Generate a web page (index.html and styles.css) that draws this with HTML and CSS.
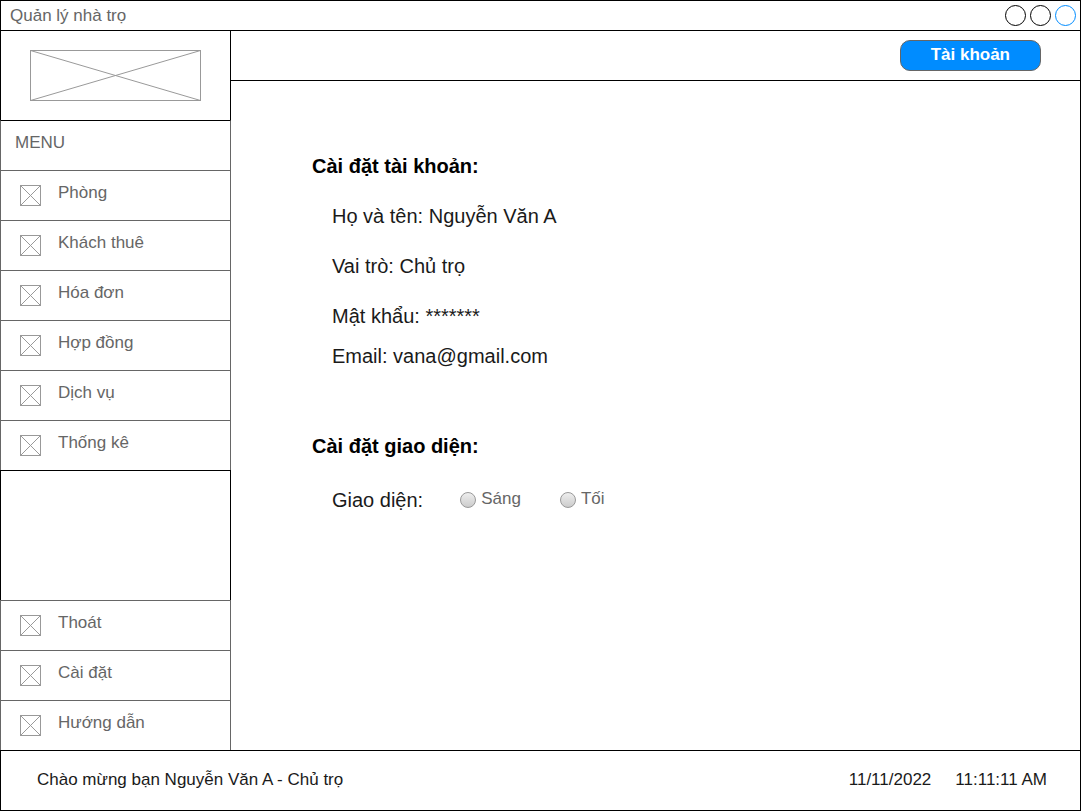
FILE: index.html
```html
<!DOCTYPE html>
<html lang="vi">
<head>
<meta charset="utf-8">
<meta name="viewport" content="width=device-width, initial-scale=1">
<title>Quản lý nhà trọ</title>
<link rel="stylesheet" href="styles.css">
</head>
<body>
<svg class="defs" aria-hidden="true">
  <symbol id="box" viewBox="0 0 21 21">
    <rect x="0.5" y="0.5" width="20" height="20"/>
    <path d="M0.5 0.5L20.5 20.5M20.5 0.5L0.5 20.5"/>
  </symbol>
</svg>
<div class="app">
  <header class="titlebar">
    <span>Quản lý nhà trọ</span>
    <div class="window-buttons">
      <button class="dot" type="button" aria-label="Thu nhỏ"></button>
      <button class="dot" type="button" aria-label="Phóng to"></button>
      <button class="dot dot-close" type="button" aria-label="Đóng"></button>
    </div>
  </header>
  <div class="body">
    <aside class="sidebar">
      <div class="logo">
        <svg class="placeholder" width="171" height="51" viewBox="0 0 171 51" role="img" aria-label="Logo">
          <rect x="0.5" y="0.5" width="170" height="50"/>
          <path d="M0.5 0.5L170.5 50.5M170.5 0.5L0.5 50.5"/>
        </svg>
      </div>
      <div class="menu-title">MENU</div>
      <nav class="menu">
        <a class="item" href="#"><svg class="placeholder icon"><use href="#box"/></svg><span>Phòng</span></a>
        <a class="item" href="#"><svg class="placeholder icon"><use href="#box"/></svg><span>Khách thuê</span></a>
        <a class="item" href="#"><svg class="placeholder icon"><use href="#box"/></svg><span>Hóa đơn</span></a>
        <a class="item" href="#"><svg class="placeholder icon"><use href="#box"/></svg><span>Hợp đồng</span></a>
        <a class="item" href="#"><svg class="placeholder icon"><use href="#box"/></svg><span>Dịch vụ</span></a>
        <a class="item" href="#"><svg class="placeholder icon"><use href="#box"/></svg><span>Thống kê</span></a>
      </nav>
      <div class="spacer"></div>
      <nav class="menu">
        <a class="item" href="#"><svg class="placeholder icon"><use href="#box"/></svg><span>Thoát</span></a>
        <a class="item" href="#"><svg class="placeholder icon"><use href="#box"/></svg><span>Cài đặt</span></a>
        <a class="item" href="#"><svg class="placeholder icon"><use href="#box"/></svg><span>Hướng dẫn</span></a>
      </nav>
    </aside>
    <div class="content">
      <div class="toolbar">
        <button class="account" type="button">Tài khoản</button>
      </div>
      <main class="settings">
        <section>
          <h2 class="heading">Cài đặt tài khoản:</h2>
          <div class="details">
            <p class="line">Họ và tên: Nguyễn Văn A</p>
            <p class="line">Vai trò: Chủ trọ</p>
            <div class="login">
              <p class="line">Mật khẩu: *******</p>
              <p class="line">Email: vana@gmail.com</p>
            </div>
          </div>
        </section>
        <section>
          <h2 class="heading">Cài đặt giao diện:</h2>
          <div class="theme" role="radiogroup" aria-labelledby="theme-label">
            <span class="line" id="theme-label">Giao diện:</span>
            <div class="options">
              <div class="option"><input class="radio" type="radio" name="theme" id="light"><label for="light">Sáng</label></div>
              <div class="option"><input class="radio" type="radio" name="theme" id="dark"><label for="dark">Tối</label></div>
            </div>
          </div>
        </section>
      </main>
    </div>
  </div>
  <footer class="statusbar">
    <span>Chào mừng bạn Nguyễn Văn A - Chủ trọ</span>
    <div class="clock"><span>11/11/2022</span><span>11:11:11 AM</span></div>
  </footer>
</div>
</body>
</html>
```

FILE: styles.css
```css
* {
  box-sizing: border-box;
}

body {
  margin: 0;
  background: #fff;
  color: #666;
  font: 17px/20px "Liberation Sans", Arial, sans-serif;
}

.defs {
  display: none;
}

.app {
  display: flex;
  flex-direction: column;
  min-height: calc(100vh - 1px);
}

.titlebar {
  display: flex;
  align-items: flex-end;
  justify-content: space-between;
  padding: 4px 4px 4px 9px;
  border: 1px solid #000;
}

.window-buttons {
  display: flex;
  gap: 4px;
}

.dot {
  width: 21px;
  height: 21px;
  padding: 0;
  border: 1px solid #000;
  border-radius: 50%;
  background: #fff;
}

.dot-close {
  border-color: #008cff;
}

.body {
  display: flex;
  flex: 1;
}

.sidebar {
  display: flex;
  flex-direction: column;
  flex: 0 0 231px;
}

.logo {
  display: flex;
  padding: 19px 29px;
  border: solid #000;
  border-width: 0 1px;
}

.placeholder {
  fill: none;
  stroke: #999;
}

.menu-title {
  padding: 12px 14px 17px;
  border: solid #666;
  border-width: 1px 1px 0;
  border-top-color: #000;
}

.item {
  display: flex;
  gap: 17px;
  padding: 12px 19px 14px;
  border: solid #666;
  border-width: 1px 1px 0;
  color: inherit;
  text-decoration: none;
}

.icon {
  width: 21px;
  height: 21px;
  margin-top: 2px;
}

.spacer {
  flex: 1;
  border: solid #000;
  border-width: 1px 1px 0;
}

.content {
  flex: 1;
  border-right: 1px solid #000;
}

.toolbar {
  display: flex;
  justify-content: flex-end;
  padding: 9px 39px;
  border-bottom: 1px solid #000;
}

.account {
  padding: 3px 30px 5px;
  border: 1px solid #666;
  border-radius: 10px;
  background: #008cff;
  color: #fff;
  font: bold 17px/21px "Liberation Sans", Arial, sans-serif;
}

.settings {
  display: grid;
  gap: 60px;
  padding: 70px 81px;
  color: #1a1a1a;
  font-size: 20px;
  line-height: 30px;
}

.heading {
  margin: 0;
  color: #000;
  font-size: 20px;
}

.details {
  display: grid;
  gap: 20px;
  padding: 20px 20px 0;
}

.login {
  display: grid;
  gap: 10px;
}

.line {
  margin: 0;
}

.theme {
  display: flex;
  gap: 37px;
  padding: 24px 20px 0;
}

.options {
  display: flex;
  gap: 39px;
  color: #666;
  font-size: 17px;
  line-height: 28px;
}

.option {
  display: flex;
  align-items: flex-start;
  gap: 5px;
}

.radio {
  appearance: none;
  width: 16px;
  height: 16px;
  margin: 7px 0 0;
  border: 1px solid #999;
  border-radius: 50%;
  background: linear-gradient(#eee, #ccc);
}

.radio:checked {
  background: radial-gradient(#333 0 3px, #ddd 4px);
}

.statusbar {
  display: flex;
  justify-content: space-between;
  padding: 19px 33px 20px 36px;
  border: 1px solid #000;
  color: #1a1a1a;
}

.clock {
  display: flex;
  gap: 24px;
}
```
